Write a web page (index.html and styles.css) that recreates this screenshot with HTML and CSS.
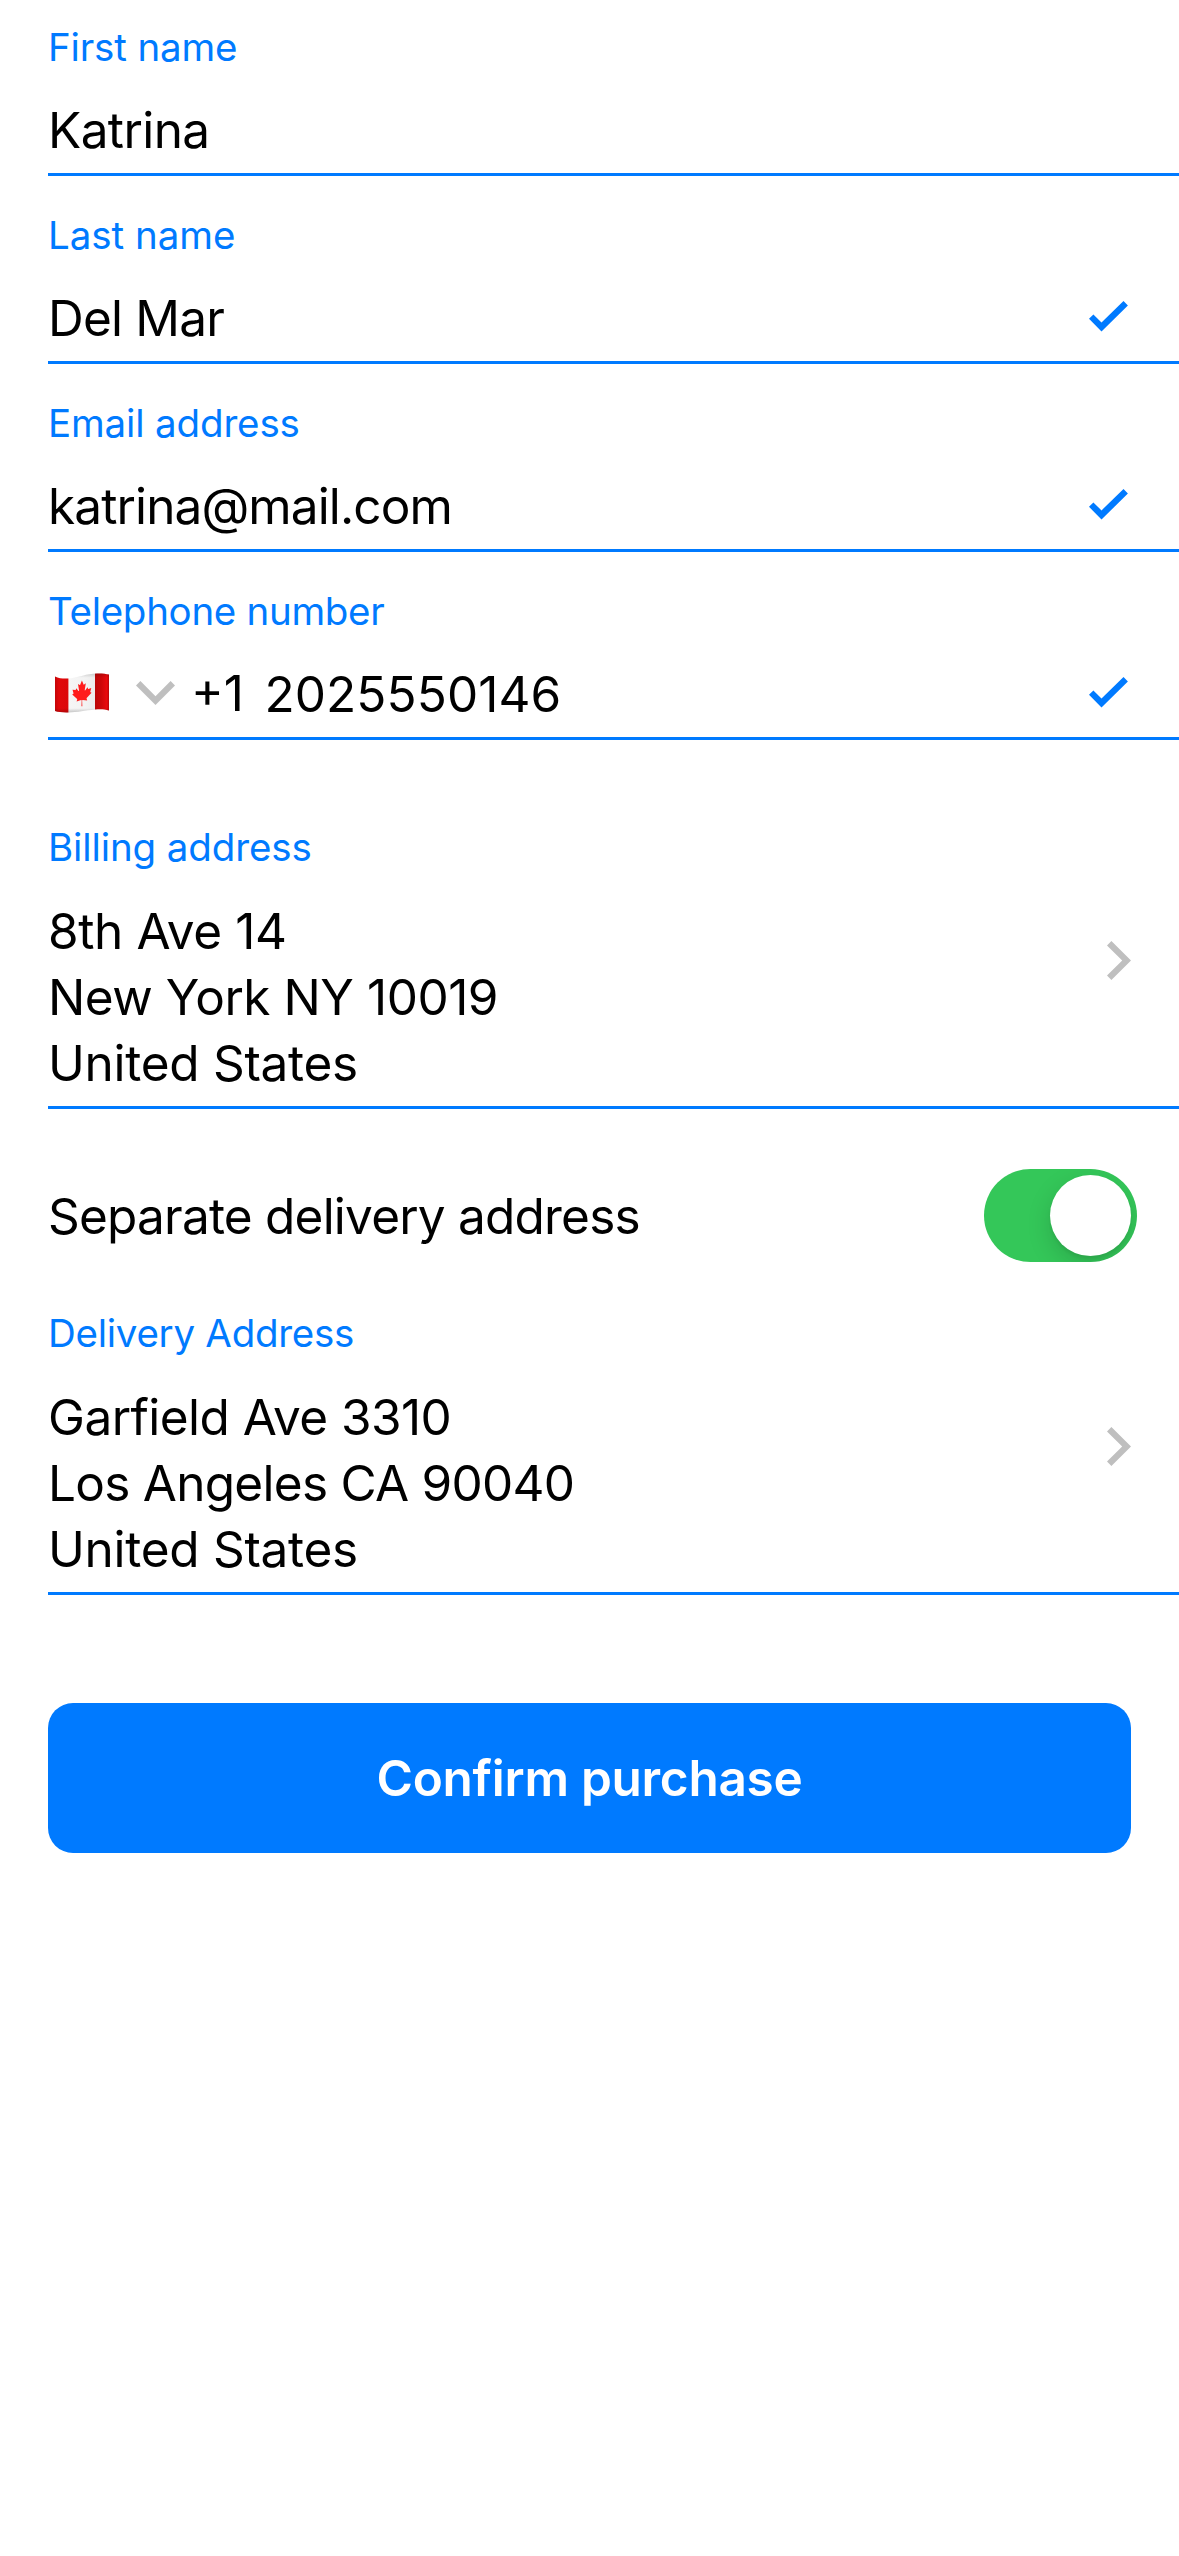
FILE: index.html
```html
<!DOCTYPE html>
<html lang="en">
<head>
<meta charset="utf-8">
<title>Purchase details</title>
<link rel="stylesheet" href="styles.css">
</head>
<body>
<svg class="defs" width="0" height="0" aria-hidden="true">
  <symbol id="check" viewBox="0 0 39 31"><path d="M0 17.8 4.4 13.4 12.5 21.4 34.5 0 38.9 4.4 12.5 30.6Z"/></symbol>
  <symbol id="chevron" viewBox="0 0 24 39"><path d="M0 4.4 4.4 0 24 19.5 4.4 39 0 34.6 15.2 19.5Z"/></symbol>
</svg>
<main class="form">
  <section class="field">
    <div class="label ls-first">First name</div>
    <div class="row"><span class="value ls-katrina">Katrina</span></div>
  </section>
  <section class="field">
    <div class="label ls-last">Last name</div>
    <div class="row"><span class="value ls-delmar">Del Mar</span><svg class="check"><use href="#check"/></svg></div>
  </section>
  <section class="field">
    <div class="label ls-email">Email address</div>
    <div class="row"><span class="value ls-mail">katrina@mail.com</span><svg class="check"><use href="#check"/></svg></div>
  </section>
  <section class="field">
    <div class="label ls-tel">Telephone number</div>
    <div class="row">
      <svg class="flag" viewBox="0 0 54 40">
        <defs>
          <linearGradient id="red-l" x1="0" x2="1" y1="0" y2="0"><stop offset="0" stop-color="#c40508"/><stop offset=".3" stop-color="#e0080b"/><stop offset="1" stop-color="#dc0609"/></linearGradient>
          <linearGradient id="red-r" x1="0" x2="1" y1="0" y2="0"><stop offset="0" stop-color="#b90608"/><stop offset=".45" stop-color="#ce0709"/><stop offset=".85" stop-color="#ea0a0d"/><stop offset="1" stop-color="#b80508"/></linearGradient>
          <linearGradient id="cloth" x1="0" x2="1" y1="0" y2="0"><stop offset="0" stop-color="#f8f8f8"/><stop offset=".55" stop-color="#f3f3f3"/><stop offset="1" stop-color="#e4e4e4"/></linearGradient>
          <linearGradient id="fold" x1="0" x2="0" y1="0" y2="1"><stop offset="0" stop-color="#000" stop-opacity=".16"/><stop offset=".12" stop-color="#000" stop-opacity="0"/><stop offset=".88" stop-color="#000" stop-opacity="0"/><stop offset="1" stop-color="#000" stop-opacity=".22"/></linearGradient>
          <clipPath id="wave"><path id="outline" d="M0 3.4C4 5.3 9 5.9 14 5.4 24 4.5 31 .4 42 .4 47 .3 51 .6 54 1.6V37.6C50 36.4 46 36.1 40 36.6 30 37.6 23 39.4 13 39.4 8 39.5 3 39.2 0 38Z"/></clipPath>
        </defs>
        <g clip-path="url(#wave)">
          <path fill="url(#cloth)" d="M0 0H54V40H0Z"/>
          <path fill="url(#red-l)" d="M0 0H13.4V40H0Z"/>
          <path fill="url(#red-r)" d="M40 0H54V40H40Z"/>
          <path fill="url(#fold)" d="M0 0H54V40H0Z"/>
        </g>
        <path class="leaf" transform="translate(26.9 20.2) skewY(-5) scale(.0052 .0064)" d="m-90 2030 45-863a95 95 0 0 0-111-98l-859 151 116-320a65 65 0 0 0-20-73l-941-762 212-99a65 65 0 0 0 34-79l-186-572 542 115a65 65 0 0 0 73-38l105-247 423 454a65 65 0 0 0 111-57l-204-1052 327 189a65 65 0 0 0 91-27l332-652 332 652a65 65 0 0 0 91 27l327-189-204 1052a65 65 0 0 0 111 57l423-454 105 247a65 65 0 0 0 73 38l542-115-186 572a65 65 0 0 0 34 79l212 99-941 762a65 65 0 0 0-20 73l116 320-859-151a95 95 0 0 0-111 98l45 863z"/>
      </svg>
      <svg class="chevron-down" viewBox="0 0 39 24"><path d="M4.4 0 0 4.4 19.5 24 39 4.4 34.6 0 19.5 15.2Z"/></svg>
      <span class="prefix">+1</span>
      <span class="value ls-number">2025550146</span>
      <svg class="check"><use href="#check"/></svg>
    </div>
  </section>

  <section class="field address billing">
    <div class="lines">
      <div class="label ls-billing">Billing address</div>
      <div class="value ls-ave">8th Ave 14</div>
      <div class="value ls-york">New York NY 10019</div>
      <div class="value ls-states">United States</div>
    </div>
    <svg class="chevron"><use href="#chevron"/></svg>
  </section>

  <div class="switch-row">
    <span class="value ls-separate">Separate delivery address</span>
    <span class="switch"><span class="knob"></span></span>
  </div>

  <section class="field address delivery">
    <div class="lines">
      <div class="label ls-delivery">Delivery Address</div>
      <div class="value ls-garfield">Garfield Ave 3310</div>
      <div class="value ls-angeles">Los Angeles CA 90040</div>
      <div class="value ls-states">United States</div>
    </div>
    <svg class="chevron"><use href="#chevron"/></svg>
  </section>

  <button class="confirm" type="button">Confirm purchase</button>
</main>
</body>
</html>
```
FILE: styles.css
```css
* { box-sizing: border-box; }

body {
  margin: 0;
  background: #fff;
  color: #000;
  font-family: Inter, "Liberation Sans", sans-serif;
}

.defs { display: block; }

.form {
  display: flex;
  flex-direction: column;
  padding-left: 48px;
}

.field {
  height: 188px;
  padding-top: 35px;
  border-bottom: 3px solid #007aff;
}

.field:first-child {
  height: 176px;
  padding-top: 23px;
}

.label {
  height: 48px;
  margin-bottom: 26px;
  font-size: 38.5px;
  line-height: 48px;
  color: #007aff;
}

.row {
  display: flex;
  align-items: center;
  height: 66px;
  padding-right: 51px;
}

.value {
  display: block;
  height: 66px;
  font-size: 49.5px;
  line-height: 66px;
  white-space: nowrap;
}

.check {
  width: 39px;
  height: 31px;
  margin: 0 0 4px auto;
  fill: #007aff;
}

.flag {
  width: 54px;
  height: 40px;
  margin: -3px 26.5px 0 7px;
}

.leaf { fill: #ff1c1c; }

.chevron-down {
  width: 39px;
  height: 24px;
  margin: -2px 16.5px 0 0;
  fill: #bfbfbf;
}

.prefix {
  width: 73.5px;
  font-size: 49.5px;
  line-height: 66px;
  margin-top: -2px;
}

.address {
  display: flex;
  align-items: center;
  justify-content: space-between;
  height: auto;
  padding: 0 48px 10px 0;
}

.billing { margin-top: 83px; }
.delivery { margin-top: 47px; }
.address .label { margin-bottom: 27px; }

.chevron {
  width: 24px;
  height: 39px;
  margin-top: 2px;
  fill: #bfbfbf;
}

.switch-row {
  display: flex;
  align-items: center;
  justify-content: space-between;
  height: 93px;
  margin-top: 60px;
  padding-right: 42px;
}

.switch {
  display: flex;
  justify-content: flex-end;
  width: 153px;
  height: 93px;
  padding: 6px;
  border-radius: 47px;
  background: #34c759;
  overflow: hidden;
}

.knob {
  width: 81px;
  height: 81px;
  border-radius: 50%;
  background: #fff;
  box-shadow: 0 9px 24px rgba(0, 0, 0, .15), 0 3px 3px rgba(0, 0, 0, .06);
}

.confirm {
  height: 150px;
  margin: 108px 48px 0 0;
  padding: 0;
  border: 0;
  border-radius: 25px;
  background: #007aff;
  color: #fff;
  font: 600 49.5px/150px Inter, "Liberation Sans", sans-serif;
  letter-spacing: -.27px;
}

/* optical tracking per string */
.ls-first, .ls-email { letter-spacing: -.15px; }
.ls-last { letter-spacing: -.03px; }
.ls-tel { letter-spacing: -.3px; }
.ls-billing { letter-spacing: -.11px; }
.ls-delivery { letter-spacing: -.27px; }
.ls-katrina { letter-spacing: -.6px; }
.ls-delmar, .ls-separate { letter-spacing: -.785px; }
.ls-mail { letter-spacing: -.88px; }
.ls-number { letter-spacing: .09px; }
.ls-ave { letter-spacing: -.39px; }
.ls-york { letter-spacing: -.46px; }
.ls-states { letter-spacing: -.28px; }
.ls-garfield { letter-spacing: -.54px; }
.ls-angeles { letter-spacing: -.73px; }
```
